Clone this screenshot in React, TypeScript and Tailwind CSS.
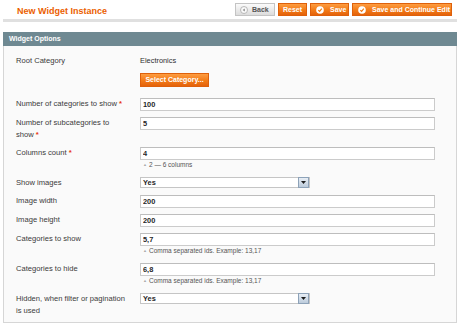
import { ReactNode } from "react";

const orange =
  "bg-gradient-to-b from-[#fd9c3f] via-[#f47e19] to-[#e4620a] border border-[#de600b] text-white";

const BackIcon = () => (
  <svg width="8" height="8" viewBox="0 0 8 8" className="shrink-0">
    <circle cx="4" cy="4" r="3.5" fill="#fafafa" stroke="#a8a8a8" strokeWidth="0.8" />
    <path d="M2.6 4 L4.8 2.6 L4.8 5.4 Z" fill="#8a8a8a" />
  </svg>
);

const SaveIcon = () => (
  <svg width="8" height="8" viewBox="0 0 8 8" className="shrink-0">
    <circle cx="4" cy="4" r="3.8" fill="#ffffff" />
    <path d="M2.3 4.1 L3.6 5.3 L5.8 2.7" fill="none" stroke="#f07a14" strokeWidth="1.2" />
  </svg>
);

const Button = ({ children, className }: { children: ReactNode; className?: string }) => (
  <div
    className={`flex h-[13px] items-center gap-[4px] text-[7px] font-bold leading-none ${className ?? ""}`}
  >
    {children}
  </div>
);

const Row = ({
  label,
  required,
  children,
}: {
  label: string;
  required?: boolean;
  children: ReactNode;
}) => (
  <div className="flex py-[3px]">
    <div className="w-[136px] shrink-0 pl-[12px] pr-[10px] text-[7.6px] leading-[12px] text-[#3a3a3a]">
      {label}
      {required && <span className="font-bold text-[#e8320a]">{"\u00a0*"}</span>}
    </div>
    <div className="flex flex-col">{children}</div>
  </div>
);

const TextInput = ({ value }: { value: string }) => (
  <input
    readOnly
    defaultValue={value}
    className="h-[13px] w-[295px] border border-[#cbcbcb] border-t-[#bdbdbd] bg-white px-[2px] text-[7.4px] font-bold text-[#262626] outline-none"
  />
);

const Select = ({ value }: { value: string }) => (
  <div className="flex h-[11px] w-[170px] items-center border border-[#c5c5c5] bg-white">
    <span className="flex-1 pl-[2px] text-[7.4px] font-bold leading-none text-[#262626]">
      {value}
    </span>
    <div className="flex h-[11px] w-[11px] items-center justify-center border border-[#8da2b8] bg-gradient-to-b from-[#e8eef5] to-[#bccbdb]">
      <svg width="5" height="3" viewBox="0 0 5 3">
        <path d="M0 0 H5 L2.5 3 Z" fill="#1c1c1c" />
      </svg>
    </div>
  </div>
);

const Note = ({ children }: { children: ReactNode }) => (
  <div className="flex h-[11px] items-center gap-[2px] pb-[1px] pl-[3px] text-[6.5px] leading-[10px] text-[#555]">
    <span className="text-[4px] text-[#aaa]">▲</span>
    <span>{children}</span>
  </div>
);

export default function App() {
  return (
    <div className="min-h-[326px] w-[460px] bg-white px-[3px] font-['Liberation_Sans',Arial,sans-serif]">
      <div className="flex h-[22px] items-start justify-between border-b-[3px] border-[#e0e0e0] pr-[5px]">
        <h3 className="pl-[14px] pt-[6px] text-[9px] font-bold leading-[11px] text-[#eb5e00]">
          New Widget Instance
        </h3>
        <div className="flex gap-[3px] pt-[3px]">
          <Button className="w-[40px] border border-[#c4c4c4] bg-gradient-to-b from-[#fbfbfb] to-[#dcdcdc] pl-[4px] text-[#555]">
            <BackIcon />
            <span>Back</span>
          </Button>
          <Button className={`${orange} w-[29px] justify-center`}>Reset</Button>
          <Button className={`${orange} w-[39px] pl-[5px]`}>
            <SaveIcon />
            <span className="pl-[2px]">Save</span>
          </Button>
          <Button className={`${orange} w-[100px] pl-[5px]`}>
            <SaveIcon />
            <span className="pl-[2px]">Save and Continue Edit</span>
          </Button>
        </div>
      </div>

      <div className="mt-[10px]">
        <div className="h-[14px] bg-[#6f8992] pl-[6px] text-[7px] font-bold leading-[14px] text-white">
          Widget Options
        </div>
        <div className="border border-t-0 border-[#d6d6d6] bg-[#fafafa] pb-[2px] pt-[6px]">
          <div className="mb-[5px]">
            <Row label="Root Category">
              <div className="text-[7.4px] leading-[12px] text-[#2e2e2e]">Electronics</div>
              <div
                className={`${orange} mt-[6px] flex h-[14px] w-[69px] items-center justify-center text-[7px] font-bold`}
              >
                Select Category...
              </div>
            </Row>
          </div>
          <Row label="Number of categories to show" required>
            <TextInput value="100" />
          </Row>
          <Row label="Number of subcategories to show" required>
            <TextInput value="5" />
          </Row>
          <Row label="Columns count" required>
            <TextInput value="4" />
            <Note>2 — 6 columns</Note>
          </Row>
          <Row label="Show images">
            <Select value="Yes" />
          </Row>
          <Row label="Image width">
            <TextInput value="200" />
          </Row>
          <Row label="Image height">
            <TextInput value="200" />
          </Row>
          <Row label="Categories to show">
            <TextInput value="5,7" />
            <Note>Comma separated ids. Example: 13,17</Note>
          </Row>
          <Row label="Categories to hide">
            <TextInput value="6,8" />
            <Note>Comma separated ids. Example: 13,17</Note>
          </Row>
          <Row label="Hidden, when filter or pagination is used">
            <Select value="Yes" />
          </Row>
        </div>
      </div>
    </div>
  );
}
